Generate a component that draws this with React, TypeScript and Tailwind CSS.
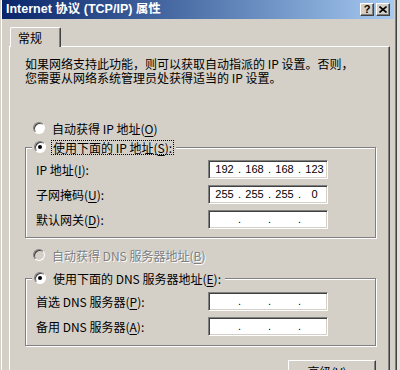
import type React from "react";

const RAISED =
	"border border-t-white border-l-white border-r-[#404040] border-b-[#404040] shadow-[inset_-1px_-1px_0_#808080]";
const SUNKEN =
	"border border-t-[#808080] border-l-[#808080] border-r-white border-b-white shadow-[inset_1px_1px_0_#404040,inset_-1px_-1px_0_#d4d0c8]";
const ETCHED =
	"border border-[#808080] shadow-[inset_1px_1px_0_#fff,1px_1px_0_#fff]";

const Radio = ({ checked, disabled }: { checked?: boolean; disabled?: boolean }) => (
	<span
		className={`flex h-[12px] w-[12px] shrink-0 items-center justify-center rounded-full border border-t-[#808080] border-l-[#808080] border-r-white border-b-white shadow-[inset_1px_1px_0_#404040] ${
			disabled ? "bg-[#d4d0c8]" : "bg-white"
		}`}
	>
		{checked && <span className="h-[4px] w-[4px] rounded-full bg-black" />}
	</span>
);

const Key = ({ k }: { k: string }) => (
	<>
		(<span className="underline underline-offset-[2px]">{k}</span>)
	</>
);

const IpBox = ({ parts }: { parts?: string[] }) => {
	const values = parts ?? ["", "", "", ""];
	return (
		<div
			className={`flex h-[19px] w-[120px] items-center overflow-hidden bg-white pl-[3px] font-['Liberation_Sans',sans-serif] text-[11px] text-black ${SUNKEN}`}
		>
			{values.map((v, i) => (
				<div key={i} className="flex items-center">
					<span className="w-[25px] text-center">{v}</span>
					{i < 3 && <span className="w-[5px] text-center">.</span>}
				</div>
			))}
		</div>
	);
};

const FieldRow = ({ label, parts }: { label: React.ReactNode; parts?: string[] }) => (
	<div className="flex h-[19px] items-center pl-[10px]">
		<span className="w-[172px]">{label}</span>
		<IpBox parts={parts} />
	</div>
);

const GroupBox = ({
	legend,
	className,
	children,
}: {
	legend: React.ReactNode;
	className: string;
	children: React.ReactNode;
}) => (
	<div className={`relative ${ETCHED} ${className}`}>
		<div className="absolute -top-[9px] left-[6px] flex h-[16px] items-center gap-[5px] bg-[#d4d0c8] px-[2px]">
			{legend}
		</div>
		<div className="flex flex-col gap-[6px]">{children}</div>
	</div>
);

export default function App() {
	return (
		<div className="h-[370px] w-[400px] overflow-hidden bg-[#e4e2dc]">
			<div className="flex h-full w-[397px] flex-col border-r border-l border-r-[#404040] border-l-[#d4d0c8] bg-[#d4d0c8] font-['Noto_Sans_CJK_SC',sans-serif] text-[12px] leading-[13px] text-black shadow-[inset_1px_0_0_#fff,inset_-1px_0_0_#808080]">
				<div className="mr-[2px] ml-[1px] flex h-[19px] shrink-0 items-center justify-between bg-gradient-to-r from-[#0a246a] to-[#a6caf0] pr-[4px] pl-[4px]">
					<span className="font-['Liberation_Sans','Noto_Sans_CJK_SC',sans-serif] text-[12.5px] font-bold text-white">
						Internet 协议 (TCP/IP) 属性
					</span>
					<div className="flex gap-[2px]">
						<span
							className={`flex h-[13px] w-[14px] items-center justify-center bg-[#d4d0c8] font-['Liberation_Sans',sans-serif] text-[11px] font-bold leading-none ${RAISED}`}
						>
							?
						</span>
						<span
							className={`flex h-[13px] w-[14px] items-center justify-center bg-[#d4d0c8] ${RAISED}`}
						>
							<svg width="8" height="7" viewBox="0 0 8 7">
								<path d="M0.5 0.5 L7.5 6.5 M7.5 0.5 L0.5 6.5" stroke="#000" strokeWidth="1.6" />
							</svg>
						</span>
					</div>
				</div>

				<div className="mt-[8px] ml-[9px] flex">
					<div className="relative z-10 -mb-px flex h-[20px] w-[51px] items-center rounded-t-[2px] border-t border-r border-l border-t-white border-r-[#404040] border-l-white bg-[#d4d0c8] pl-[7px] shadow-[inset_-1px_0_0_#808080]">
						常规
					</div>
				</div>

				<div className="mr-[6px] ml-[8px] flex flex-1 flex-col border-t border-r border-b border-l border-t-white border-r-[#404040] border-b-[#404040] border-l-white pt-[10px] pr-[13px] pl-[15px] shadow-[inset_-1px_-1px_0_#808080]">
					<p className="leading-[13.5px]">
						如果网络支持此功能，则可以获取自动指派的 IP 设置。否则，
						<br />
						您需要从网络系统管理员处获得适当的 IP 设置。
					</p>

					<div className="mt-[36px] flex h-[16px] items-center gap-[7px] pl-[8px]">
						<Radio />
						<span>
							自动获得 IP 地址<Key k="O" />
						</span>
					</div>

					<GroupBox
						className="mt-[11px] pt-[12px] pb-[8px]"
						legend={
							<>
								<Radio checked />
								<span className="border border-dotted border-black px-[1px]">
									使用下面的 IP 地址<Key k="S" />:
								</span>
							</>
						}
					>
						<FieldRow
							label={
								<>
									IP 地址<Key k="I" />:
								</>
							}
							parts={["192", "168", "168", "123"]}
						/>
						<FieldRow
							label={
								<>
									子网掩码<Key k="U" />:
								</>
							}
							parts={["255", "255", "255", "0"]}
						/>
						<FieldRow
							label={
								<>
									默认网关<Key k="D" />:
								</>
							}
						/>
					</GroupBox>

					<div className="mt-[9px] flex h-[16px] items-center gap-[7px] pl-[8px]">
						<Radio disabled />
						<span className="text-[#808080] [text-shadow:1px_1px_0_#fff]">
							自动获得 DNS 服务器地址<Key k="B" />
						</span>
					</div>

					<GroupBox
						className="mt-[15px] pt-[13px] pb-[9px]"
						legend={
							<>
								<Radio checked />
								<span className="px-[2px]">
									使用下面的 DNS 服务器地址<Key k="E" />:
								</span>
							</>
						}
					>
						<FieldRow
							label={
								<>
									首选 DNS 服务器<Key k="P" />:
								</>
							}
						/>
						<FieldRow
							label={
								<>
									备用 DNS 服务器<Key k="A" />:
								</>
							}
						/>
					</GroupBox>

					<div className="mt-[14px] flex justify-end">
						<button
							type="button"
							className={`flex h-[23px] w-[88px] items-center justify-center bg-[#d4d0c8] ${RAISED}`}
						>
							高级<Key k="V" />...
						</button>
					</div>
				</div>
			</div>
		</div>
	);
}
